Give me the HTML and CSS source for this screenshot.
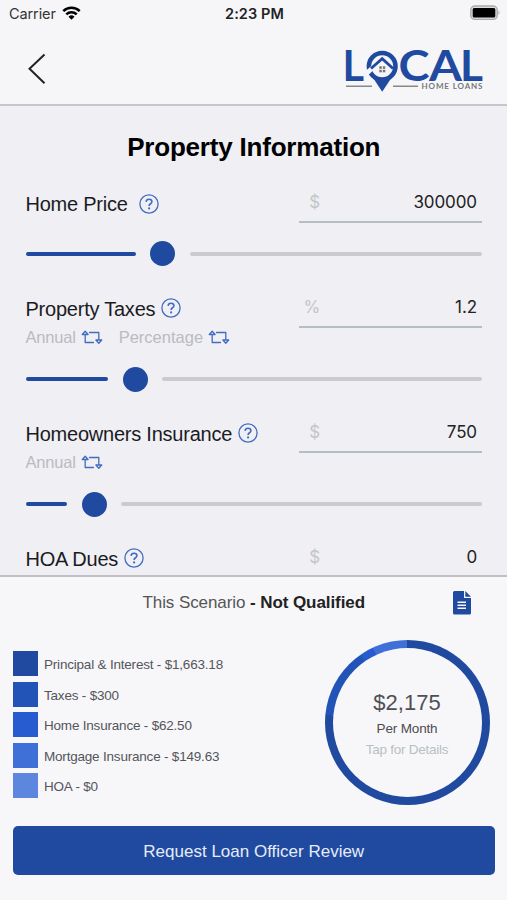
FILE: index.html
```html
<!DOCTYPE html>
<html lang="en">
<head>
<meta charset="utf-8">
<title>Property Information</title>
<link rel="stylesheet" href="styles.css">
</head>
<body>
<svg class="defs" width="0" height="0" aria-hidden="true">
  <symbol id="help" viewBox="0 0 20 20">
    <circle cx="10" cy="10" r="9.1" fill="none" stroke="currentColor" stroke-width="1.3"/>
    <path d="M7.1 7.9C7.2 6.2 8.4 5.3 10 5.3s2.9 1 2.9 2.4c0 2-2.8 2.1-2.8 4.2" fill="none" stroke="currentColor" stroke-width="1.6"/>
    <circle cx="10.1" cy="14.4" r="1.1" fill="currentColor"/>
  </symbol>
  <symbol id="swap" viewBox="0 0 22 15">
    <path d="M12.500 12.500H4.200V4.500M1.300 4.500L4.200 1.200L7.100 4.500ZM8.500 2.500H17.800V10M20.700 10L17.800 13.300L14.900 10Z" fill="none" stroke="currentColor" stroke-width="1.300" stroke-linejoin="round" stroke-linecap="round"/>
  </symbol>
</svg>
<div class="screen">
  <header class="top">
    <div class="status">
      <div class="carrier"><span>Carrier</span>
        <svg width="19" height="14" viewBox="0 0 19 14"><g fill="none" stroke="#000" stroke-width="2.500"><path d="M1.300 5.100a11.600 11.600 0 0 1 16.400 0"/><path d="M4.300 8.300a7.400 7.400 0 0 1 10.400 0"/></g><path d="M9.500 13.800L6.500 10.700a4.300 4.300 0 0 1 6 0z"/></svg>
      </div>
      <div class="clock">2:23 PM</div>
      <svg class="battery" width="31" height="16" viewBox="0 0 31 16"><rect x=".8" y="1" width="26.400" height="13.400" rx="4" fill="#ddd" stroke="#aaa" stroke-width="1.400"/><rect x="2.700" y="3" width="22.600" height="9.600" rx="1.500" fill="#000"/><path d="M28.500 5.300q2.200 2.300 0 4.800z" fill="#aaa"/></svg>
    </div>
    <div class="nav">
      <svg class="back" width="18" height="32" viewBox="0 0 18 32"><path d="M16.500 1.500L1.500 15.800L16.500 30.300" fill="none" stroke="#222" stroke-width="2"/></svg>
      <svg class="logo" width="140" height="44" viewBox="0 0 140 44">
        <g class="logo-name"><text x="-2.500" y="31.800">L</text><text x="53.500" y="31.800" textLength="31" lengthAdjust="spacingAndGlyphs">C</text><text x="84" y="31.800" textLength="33" lengthAdjust="spacingAndGlyphs">A</text><text x="115" y="31.800" textLength="23" lengthAdjust="spacingAndGlyphs">L</text></g>
        <circle cx="37.200" cy="17.300" r="13.300" fill="none" stroke="#1f4a9f" stroke-width="4.600"/>
        <path d="M26.500 26.500Q37.200 32 48 26.500L37.200 42.700Z" fill="#1f4a9f"/>
        <path d="M21.500 24.500L37.200 9.800L46.500 18" fill="none" stroke="#f6f6f9" stroke-width="4.500"/>
        <path d="M26 19.500L37.200 9.700L48 19.500" fill="none" stroke="#1f4a9f" stroke-width="2.800"/>
        <g fill="#777"><rect x="34.300" y="17.300" width="2.500" height="2.500"/><rect x="37.800" y="17.300" width="2.500" height="2.500"/><rect x="34.300" y="20.800" width="2.500" height="2.500"/><rect x="37.800" y="20.800" width="2.500" height="2.500"/></g>
        <path d="M1 37.300H27M48 37.300H73" stroke="#888" stroke-width="1.600"/>
        <text class="logo-tag" x="76.500" y="40.300" textLength="61">HOME LOANS</text>
      </svg>
    </div>
  </header>

  <main class="form">
    <h1>Property Information</h1>
    <section class="row">
      <div class="head">
        <div class="info"><div class="label"><span class="wide">Home Price</span><svg class="help"><use href="#help"/></svg></div></div>
        <div class="field"><span class="unit">$</span><span>300000</span></div>
      </div>
      <div class="slider"><i class="fill" style="width:110px"></i><i class="knob"></i><i class="rest"></i></div>
    </section>
    <section class="row tall">
      <div class="head">
        <div class="info"><div class="label"><span>Property Taxes</span><svg class="help"><use href="#help"/></svg></div>
          <div class="modes"><span>Annual</span><svg class="swap"><use href="#swap"/></svg><span class="second">Percentage</span><svg class="swap"><use href="#swap"/></svg></div></div>
        <div class="field"><span class="unit">%</span><span>1.2</span></div>
      </div>
      <div class="slider"><i class="fill" style="width:82.500px"></i><i class="knob"></i><i class="rest"></i></div>
    </section>
    <section class="row tall">
      <div class="head">
        <div class="info"><div class="label"><span>Homeowners Insurance</span><svg class="help"><use href="#help"/></svg></div>
          <div class="modes"><span>Annual</span><svg class="swap"><use href="#swap"/></svg></div></div>
        <div class="field"><span class="unit">$</span><span>750</span></div>
      </div>
      <div class="slider"><i class="fill" style="width:41.500px"></i><i class="knob"></i><i class="rest"></i></div>
    </section>
    <section class="row">
      <div class="head">
        <div class="info"><div class="label"><span>HOA Dues</span><svg class="help"><use href="#help"/></svg></div></div>
        <div class="field"><span class="unit">$</span><span>0</span></div>
      </div>
    </section>
  </main>

  <footer class="summary">
    <div class="scenario">
      <div class="verdict"><span>This Scenario </span><b>- Not Qualified</b></div>
      <svg class="doc" width="18" height="24" viewBox="0 0 18 24"><path d="M1.500 0H11V7H18V22a1.500 1.500 0 0 1-1.500 1.500H1.500A1.500 1.500 0 0 1 0 22V1.500A1.500 1.500 0 0 1 1.500 0Z" fill="#1f4a9f"/><path d="M12.300 0L18 5.700H12.300Z" fill="#1f4a9f"/><path d="M4.500 11.300H13M4.500 14.300H13M4.500 17.300H13" stroke="#f7f7fa" stroke-width="1.400"/></svg>
    </div>
    <div class="breakdown">
      <ul class="legend">
        <li><i class="c1"></i><span>Principal &amp; Interest - $1,663.18</span></li>
        <li><i class="c2"></i><span>Taxes - $300</span></li>
        <li><i class="c3"></i><span>Home Insurance - $62.50</span></li>
        <li><i class="c4"></i><span>Mortgage Insurance - $149.63</span></li>
        <li><i class="c5"></i><span>HOA - $0</span></li>
      </ul>
      <div class="donut">
        <div class="hole"><div class="total">$2,175</div><div class="per">Per Month</div><div class="tap">Tap for Details</div></div>
      </div>
    </div>
    <button class="cta">Request Loan Officer Review</button>
  </footer>
</div>
</body>
</html>
```
FILE: styles.css
```css
* { box-sizing: border-box; }
body { margin: 0; font-family: "Liberation Sans", Arial, sans-serif; color: #1b1b1f; }
.defs { position: absolute; }
svg { display: block; flex: none; }
.screen { width: 507px; height: 900px; display: flex; flex-direction: column; overflow: hidden; background: #efeff4; }

.top { height: 106px; flex: none; background: #f6f6f9; border-bottom: 2px solid #c7c7cb; }
.status { height: 28px; display: grid; grid-template-columns: 1fr auto 1fr; align-items: center; padding: 0 6px 0 9px; font-family: Inter, sans-serif; font-size: 14.500px; line-height: 16px; color: #333; }
.carrier { display: flex; align-items: center; gap: 6px; letter-spacing: -.1px; }
.carrier svg { margin-top: -3px; }
.clock { font-weight: 600; color: #222; letter-spacing: .1px; margin-right: 1px; }
.battery { justify-self: end; margin-top: -2px; }
.nav { display: flex; justify-content: space-between; padding: 21px 22px 0 28px; }
.back { margin-top: 4px; }
.logo { overflow: visible; }
.logo-name { font: 700 41.500px Lato, sans-serif; fill: #1f4a9f; }
.logo-tag { font: 700 8px Lato, sans-serif; fill: #777; }

.form { height: 469px; flex: none; overflow: hidden; padding: 24px 25px 0 25.500px; }
h1 { margin: 0; height: 50px; line-height: 34px; font-size: 26px; letter-spacing: -.2px; text-align: center; color: #000; }
.row { height: 104.500px; }
.tall { height: 125.200px; }
.head { display: flex; justify-content: space-between; height: 61px; }
.tall .head { height: 82px; }
.info { padding-top: 14px; }
.label { display: flex; align-items: center; height: 20px; font-size: 20px; letter-spacing: -.23px; white-space: nowrap; }
.label span { padding-top: 1px; }
.help { width: 20px; height: 20px; margin: -1px 0 0 6px; color: #426cc0; }
.wide + .help { margin-left: 11px; }
.modes { display: flex; align-items: center; height: 20px; margin-top: 9px; font-size: 16.500px; letter-spacing: -.2px; color: #bbbbc0; }
.swap { width: 22px; height: 15px; margin: -1px 0 0 5px; color: #426cc0; }
.second { margin-left: 16px; letter-spacing: 0; }
.field { width: 183px; height: 43px; display: flex; justify-content: space-between; align-items: center; padding: 3px 5px 0 10px; border-bottom: 2px solid #b5bfc3; font: 17px Inter, sans-serif; letter-spacing: -.1px; color: #222; }
.unit { width: 11px; display: flex; justify-content: flex-end; color: #c3c6c8; }
.slider { display: flex; align-items: center; height: 25px; gap: 14.500px; }
.slider i { flex: none; }
.fill, .rest { height: 4px; border-radius: 2px; }
.fill { background: #1f4a9f; }
.knob { width: 25px; height: 25px; border-radius: 50%; background: #1f4a9f; }
.slider .rest { flex: 1; background: #cbcbcd; }

.summary { flex: 1; background: #f7f7fa; border-top: 2px solid #c0c0c4; padding: 0 12.500px 0 13px; }
.scenario { height: 52px; display: grid; grid-template-columns: 1fr auto 1fr; align-items: center; }
.verdict { grid-column: 2; font-size: 17px; letter-spacing: -.08px; color: #555; white-space: nowrap; }
.verdict b { color: #222; }
.doc { justify-self: end; margin-right: 24px; }
.breakdown { display: flex; justify-content: space-between; padding: 11px 5px 0 0; height: 197.400px; }
.legend { list-style: none; margin: 11px 0 0; padding: 0; display: flex; flex-direction: column; gap: 5.600px; }
.legend li { display: flex; align-items: center; gap: 6px; height: 25px; font-size: 13.500px; letter-spacing: -.2px; color: #55555a; white-space: nowrap; }
.legend i { width: 25px; height: 25px; }
.legend span { padding-top: 2px; }
.c1 { background: #1f4a9f; }
.c2 { background: #2253b7; }
.c3 { background: #265cd0; }
.c4 { background: #3f70d8; }
.c5 { background: #5d87de; }
.donut { width: 165px; height: 165px; border-radius: 50%; padding: 8px; background: conic-gradient(#1f4a9f 0 76.460%, #2253b7 0 90.250%, #265cd0 0 93.120%, #3f70d8 0); }
.hole { height: 100%; border-radius: 50%; background: #f7f7fa; display: flex; flex-direction: column; align-items: center; padding-top: 41px; white-space: nowrap; }
.total { font-size: 22px; line-height: 28px; color: #505054; }
.per { font-size: 13.500px; line-height: 24px; letter-spacing: -.15px; color: #4c4c50; }
.tap { font-size: 13.500px; line-height: 18px; letter-spacing: -.25px; color: #b8c0c2; }
.cta { display: block; width: 100%; height: 49px; margin: 0; padding: 2px 0 0; border: 0; border-radius: 5px; background: #1f4a9f; color: #e6ecf8; font: 17px "Liberation Sans", Arial, sans-serif; }
```
